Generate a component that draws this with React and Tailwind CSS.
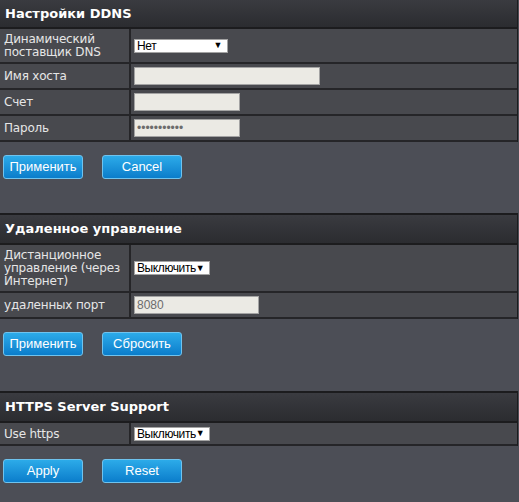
import React from 'react';

const label = "font-['DejaVu_Sans',Verdana,sans-serif] text-[12px] tracking-[-0.2px] leading-[13px] whitespace-nowrap text-[#e6e6e6]";

const Header = ({ children, first }) => (
    <div
        className={`${first ? 'h-[29px]' : 'h-[32px] border-t-2'} flex items-center pl-[5px] bg-gradient-to-b from-[#3a3b40] to-[#2b2c30] border-b-2 border-[#1c1c1e] font-['DejaVu_Sans',Verdana,sans-serif] font-bold text-[13px] text-white`}
    >
        {children}
    </div>
);

const Row = ({ title, h, children }) => (
    <div className="flex border-b-2 border-[#252528] bg-[#48494e]" style={{ height: h }}>
        <div className={`w-[131px] shrink-0 flex items-center pl-[4px] pt-[1px] border-r-2 border-[#252528] ${label}`}>
            <div>{title}</div>
        </div>
        <div className="flex-1 flex items-center pl-[3px]">{children}</div>
    </div>
);

const TextBox = ({ w, value, type = 'text' }) => (
    <input
        type={type}
        defaultValue={value}
        className={`${w} h-[18px] bg-[#ebeae4] border border-[#a3a3a3] px-[2px] text-[12px] text-[#6c6c6c] font-['Liberation_Sans',Arial,sans-serif] outline-none`}
    />
);

const Select = ({ w, value }) => (
    <div className={`${w} h-[14px] bg-white border border-[#a3a3a3] flex items-center justify-between pl-[2px] pr-[5px] font-['Liberation_Sans',Arial,sans-serif] text-[12px] tracking-[-0.4px] leading-none text-black`}>
        <span>{value}</span>
        <span className="text-[9px]">▼</span>
    </div>
);

const Button = ({ children }) => (
    <button className="w-[80px] h-[24px] rounded-[3px] border border-[#6fc3ee] bg-gradient-to-b from-[#2cabe9] to-[#0a7dcb] text-white font-['Liberation_Sans',Arial,sans-serif] text-[13px]">
        {children}
    </button>
);

const Buttons = ({ a, b, pb }) => (
    <div className={`flex gap-[19px] pl-[3px] pt-[13px] ${pb}`}>
        <Button>{a}</Button>
        <Button>{b}</Button>
    </div>
);

export default function App() {
    return (
        <div className="w-[519px] h-[502px] bg-[#4c4e56] overflow-hidden">
            <div className="w-[518px] border-r border-[#1c1c1e]">
                <Header first>Настройки DDNS</Header>
                <Row title={<>Динамический<br />поставщик DNS</>} h={35}>
                    <Select w="w-[94px]" value="Нет" />
                </Row>
                <Row title="Имя хоста" h={26}>
                    <TextBox w="w-[186px]" />
                </Row>
                <Row title="Счет" h={26}>
                    <TextBox w="w-[106px]" />
                </Row>
                <Row title="Пароль" h={26}>
                    <TextBox w="w-[106px]" type="password" value="xxxxxxxxxxx" />
                </Row>
            </div>
            <Buttons a="Применить" b="Cancel" pb="pb-[34px]" />

            <div className="w-[518px] border-r border-[#1c1c1e]">
                <Header>Удаленное управление</Header>
                <Row title={<>Дистанционное<br />управление (через<br />Интернет)</>} h={48}>
                    <Select w="w-[76px]" value="Выключить" />
                </Row>
                <Row title="удаленных порт" h={26}>
                    <TextBox w="w-[125px]" value="8080" />
                </Row>
            </div>
            <Buttons a="Применить" b="Сбросить" pb="pb-[35px]" />

            <div className="w-[518px] border-r border-[#1c1c1e]">
                <Header>HTTPS Server Support</Header>
                <Row title="Use https" h={23}>
                    <Select w="w-[76px]" value="Выключить" />
                </Row>
            </div>
            <Buttons a="Apply" b="Reset" pb="pb-[20px]" />
        </div>
    );
}
